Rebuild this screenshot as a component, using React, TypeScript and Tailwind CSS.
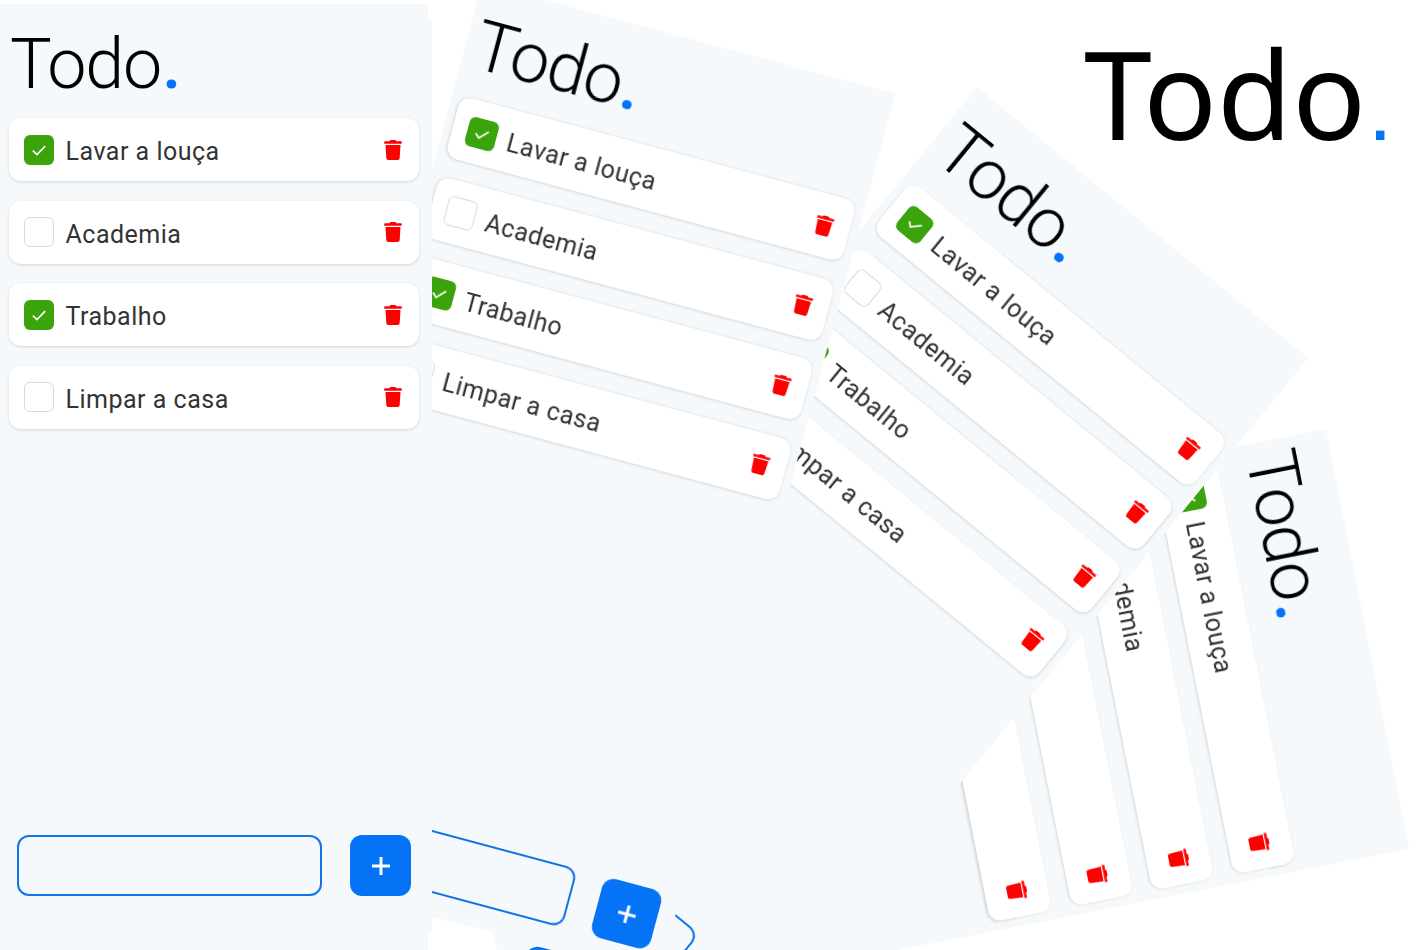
import { FaTrash } from 'react-icons/fa'

const tasks = [
  { id: 1, title: 'Lavar a louça', done: true },
  { id: 2, title: 'Academia', done: false },
  { id: 3, title: 'Trabalho', done: true },
  { id: 4, title: 'Limpar a casa', done: false },
]

function Screen({ className }: { className: string }) {
  return (
    <div className={`absolute flex h-[1000px] w-[428px] flex-col bg-[#f5f9fc] font-['Roboto',sans-serif] ${className}`}>
      {/* Header */}
      <div className="h-[114px] pl-[10px] pt-[22px] text-[70px] leading-[76px] font-[360] tracking-[-1.2px] text-black">
        Todo<span className="ml-[1px] font-medium text-[#0573f5]">.</span>
      </div>

      {/* Task list */}
      <div className="flex flex-1 flex-col gap-[19.5px] pl-[9px] pr-[9px]">
        {tasks.map((task) => (
          <div
            key={task.id}
            className="flex h-[63px] w-[410px] items-center rounded-[12px] bg-white pl-[15px] pr-[16px] shadow-[0_1px_3px_rgba(0,0,0,0.14)]"
          >
            {task.done ? (
              <div className="flex h-[30px] w-[30px] items-center justify-center rounded-[6px] bg-[#3ba40c]">
                <svg width="18" height="18" viewBox="0 0 16 16" fill="none" stroke="white" strokeWidth="1.5">
                  <path d="M2.5 8.5 L6.2 12 L13.5 4.5" />
                </svg>
              </div>
            ) : (
              <div className="h-[30px] w-[30px] rounded-[6px] border border-[#d9d9d9] bg-white" />
            )}
            <span className="ml-[11.5px] flex-1 pt-[5px] text-[25px] font-[380] tracking-[0.5px] text-[#333333]">{task.title}</span>
            <FaTrash size={20} color="#ff0000" />
          </div>
        ))}
      </div>

      {/* New task */}
      <div className="mb-[108px] flex items-center pl-[17px]">
        <div className="h-[61px] w-[305px] rounded-[12px] border-2 border-[#1273e6]" />
        <button className="ml-[28px] flex h-[61px] w-[61px] items-center justify-center rounded-[12px] bg-[#0573f5]">
          <svg width="18" height="18" viewBox="0 0 18 18" stroke="white" strokeWidth="3">
            <path d="M9 0V18M0 9H18" />
          </svg>
        </button>
      </div>
    </div>
  )
}

export default function App() {
  return (
    <div className="relative h-[950px] w-[1424px] overflow-hidden bg-white">
      <Screen className="left-[1325.9px] top-[429.2px] origin-top-left rotate-[78.8deg] blur-[0.7px]" />
      <Screen className="left-[977.4px] top-[87.1px] origin-top-left rotate-[39.3deg] blur-[0.7px]" />
      <Screen className="left-[482.2px] top-[-16.7px] origin-top-left rotate-[15deg] blur-[0.7px]" />

      {/* Corner artefacts below the tilted screen */}
      <div className="absolute left-[428px] top-[910px] h-[40px] w-[75px] bg-white [clip-path:polygon(5.3%_17.5%,87%_55%,92%_100%,0%_100%,0%_57.5%,5.3%_57.5%)]" />
      <div className="absolute left-[520px] top-[951px] h-[62px] w-[62px] rotate-[15deg] rounded-[12px] bg-[#0573f5]" />

      <div className="absolute left-[1084px] top-[10px] font-['Noto_Sans',sans-serif] text-[122px] leading-[166px] text-black">
        Todo<span className="ml-[2px] font-['Liberation_Sans',sans-serif] text-[88px] text-[#0573f5]">.</span>
      </div>

      <div className="absolute left-[428px] top-[18px] h-[915px] w-[4px] bg-[#f5f9fc]" />
      <Screen className="left-0 top-[4px]" />
    </div>
  )
}
